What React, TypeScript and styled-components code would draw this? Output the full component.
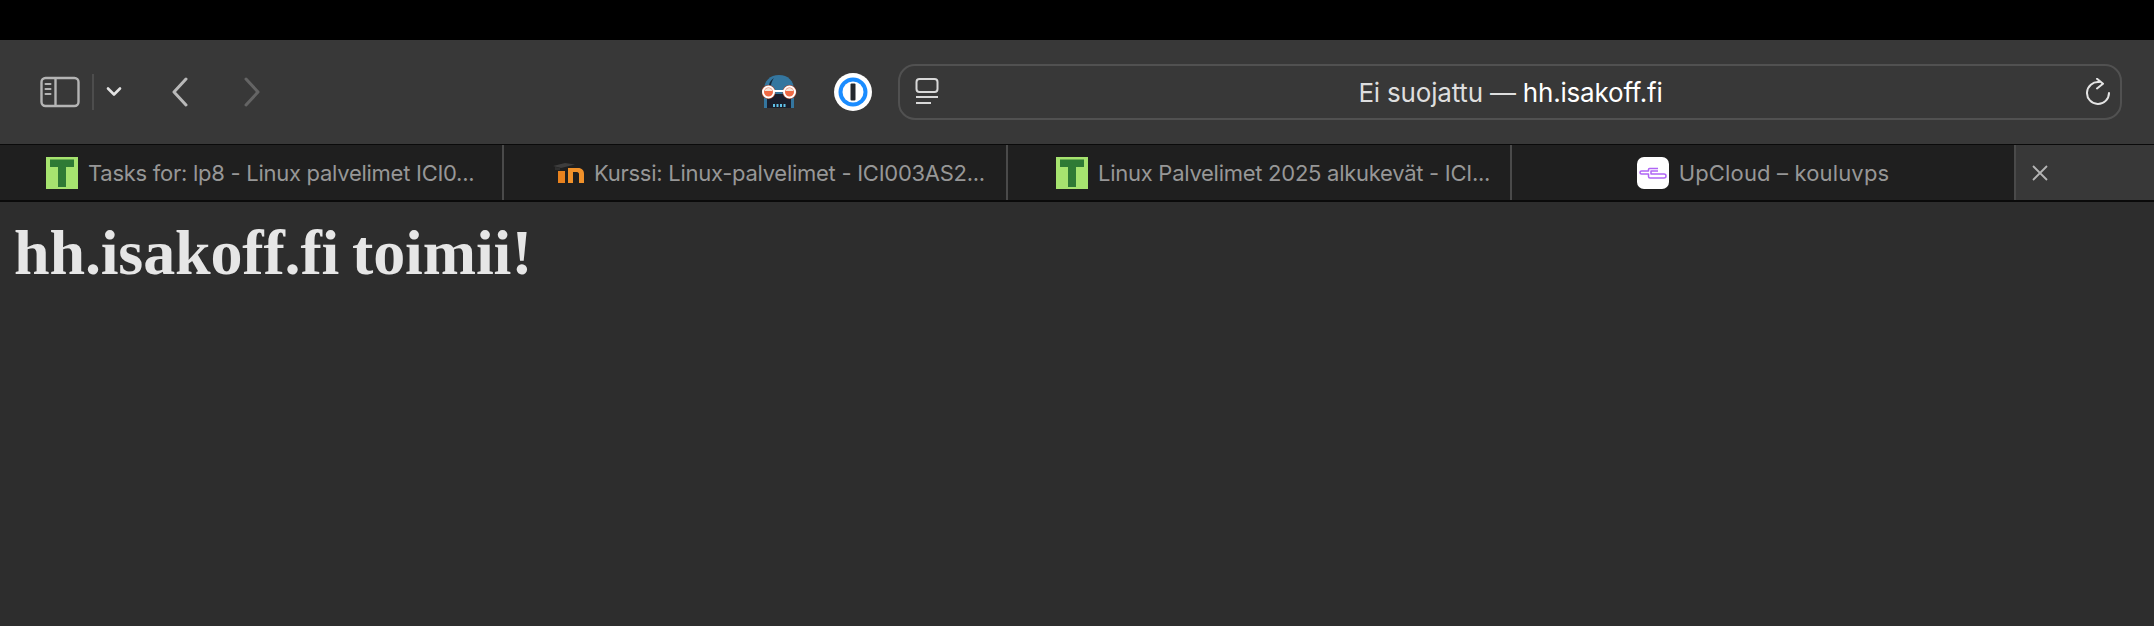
import React from "react";
import styled, { createGlobalStyle } from "styled-components";

const GlobalStyle = createGlobalStyle`
  html, body {
    margin: 0;
    padding: 0;
    background: #2d2d2d;
  }
  body {
    font-family: "Inter", "Liberation Sans", sans-serif;
    overflow: hidden;
  }
`;

const Page = styled.div`
  width: 2154px;
  height: 626px;
  display: flex;
  flex-direction: column;
  background: #2d2d2d;
`;

const TopStrip = styled.div`
  height: 40px;
  background: #000;
`;

const Toolbar = styled.div`
  height: 104px;
  background: #383838;
  display: flex;
  align-items: center;
  padding: 0 32px 0 40px;
`;

const ToolbarLeft = styled.div`
  display: flex;
  align-items: center;
  flex: 1;
`;

const Divider = styled.div`
  width: 2px;
  height: 36px;
  background: #4d4d4d;
  margin: 0 12px;
`;

const IconSlot = styled.svg<{ $ml?: number }>`
  display: block;
  flex-shrink: 0;
  margin-left: ${(p) => p.$ml ?? 0}px;
`;

const Extensions = styled.div`
  display: flex;
  align-items: center;
  gap: 36px;
  margin-right: 26px;
`;

const AddressBar = styled.div`
  width: 1224px;
  height: 56px;
  box-sizing: border-box;
  border: 2px solid #515151;
  border-radius: 17px;
  display: flex;
  align-items: center;
  padding: 0 10px 0 15px;
`;

const AddressText = styled.div`
  flex: 1;
  text-align: center;
  font-size: 26px;
  letter-spacing: -0.2px;
  color: #dedede;
  padding-right: 4px;

  b {
    font-weight: 400;
    color: #fff;
  }
`;

const TabBar = styled.div`
  height: 58px;
  box-sizing: border-box;
  background: #383838;
  border-top: 1px solid #0a0a0a;
  border-bottom: 2px solid #0a0a0a;
  display: flex;
`;

const Tab = styled.div<{ $inset: number }>`
  width: 504px;
  box-sizing: border-box;
  background: #1f1f1f;
  border-right: 2px solid #4a4a4a;
  display: flex;
  align-items: center;
  justify-content: ${(p) => (p.$inset ? "flex-start" : "center")};
  gap: 10px;
  padding-left: ${(p) => p.$inset}px;
`;

const TabTitle = styled.span<{ $tracking: number }>`
  font-size: 22px;
  letter-spacing: ${(p) => p.$tracking}px;
  color: #979797;
  white-space: nowrap;
`;

const TabClose = styled.div`
  flex: 1;
  display: flex;
  align-items: center;
  padding-left: 16px;
`;

const Content = styled.div`
  flex: 1;
  padding: 0 14px;
`;

const Heading = styled.h1`
  margin: 14px 0 0;
  font-family: "Liberation Serif", "Times New Roman", serif;
  font-size: 64px;
  font-weight: 700;
  line-height: 74px;
  letter-spacing: -0.15px;
  word-spacing: -3px;
  color: #e6e6e6;
`;

const SidebarIcon = () => (
  <IconSlot width="40" height="32" viewBox="0 0 40 32" fill="none">
    <rect x="1.5" y="2" width="37" height="28" rx="4" stroke="#b4b4b4" strokeWidth="2.4" />
    <path d="M15.5 2v28" stroke="#b4b4b4" strokeWidth="2.4" />
    <path d="M5.5 8h5M5.5 13h5M5.5 18h5" stroke="#b4b4b4" strokeWidth="2" strokeLinecap="round" />
  </IconSlot>
);

const RobotIcon = () => (
  <IconSlot width="36" height="36" viewBox="0 0 36 36">
    <path d="M2 34V16C2 7 8 1 17 1s15 6 15 15v18z" fill="#34769f" />
    <path d="M12 4C9 6 7.500 8 7 11h2c.5-3 1.500-5 3-7z" fill="#14283a" />
    <path d="M5 20h24v14H5z" fill="#1b1f2c" />
    <path d="M11 30h2v3h-2zM14.500 30h2v3h-2zM18 30h2v3h-2zM21.500 30h2v3h-2z" fill="#5fc0e8" />
    <circle cx="6.500" cy="18" r="7" fill="#a8472e" />
    <circle cx="27.500" cy="18" r="7" fill="#a8472e" />
    <circle cx="6.500" cy="18" r="5.500" fill="#ef6a45" stroke="#fff" strokeWidth="2" />
    <circle cx="27.500" cy="18" r="5.500" fill="#ef6a45" stroke="#fff" strokeWidth="2" />
    <path d="M2.500 17a4.200 4.200 0 0 1 8 0zM23.500 17a4.200 4.200 0 0 1 8 0z" fill="#f3e4da" />
    <path d="M12 17h10" stroke="#fff" strokeWidth="2" />
  </IconSlot>
);

const TasksFavicon = () => (
  <IconSlot width="32" height="32" viewBox="0 0 32 32">
    <rect width="32" height="32" fill="#a6e36f" />
    <path d="M4 2.500h24v7.500H20v20h-8V10H4z" fill="#2f7a35" />
  </IconSlot>
);

const MoodleFavicon = () => (
  <IconSlot width="32" height="32" viewBox="0 0 32 32">
    <path d="M1 9L13 6l10 1.500L9 11z" fill="#3d3d3d" />
    <path d="M3 10l5 1v2H3z" fill="#2f2f2f" />
    <path d="M6 14h7v12H6z" fill="#e8821e" />
    <path d="M16 26V11h10c4 0 6 2.500 6 6v9h-5v-9c0-1-1-2-2-2h-4v11z" fill="#f0912a" />
  </IconSlot>
);

const UpCloudFavicon = () => (
  <IconSlot width="32" height="32" viewBox="0 0 32 32">
    <rect width="32" height="32" rx="7" fill="#fff" />
    <path
      d="M21 11.500h-8.500a1 1 0 0 0-1 1V14H4.500a1.500 1.500 0 0 0 0 3H11.500v2.500a1.500 1.500 0 0 0 1.500 1.500h14a2 2 0 0 0 0-4H14v-3h7"
      fill="none"
      stroke="#b065f5"
      strokeWidth="1.500"
      strokeLinejoin="round"
    />
  </IconSlot>
);

const tabs = [
  { title: "Tasks for: lp8 - Linux palvelimet ICI0...", icon: <TasksFavicon />, inset: 46, tracking: -0.27 },
  { title: "Kurssi: Linux-palvelimet - ICI003AS2...", icon: <MoodleFavicon />, inset: 48, tracking: -0.27 },
  { title: "Linux Palvelimet 2025 alkukevät - ICI...", icon: <TasksFavicon />, inset: 48, tracking: -0.27 },
  { title: "UpCloud – kouluvps", icon: <UpCloudFavicon />, inset: 0, tracking: 0.15 },
];

export default function App() {
  return (
    <Page>
      <GlobalStyle />
      <TopStrip />
      <Toolbar>
        <ToolbarLeft>
          <SidebarIcon />
          <Divider />
          <IconSlot width="16" height="12" viewBox="0 0 16 12" fill="none">
            <path d="M2 2.500l6 6 6-6" stroke="#e2e2e2" strokeWidth="2.600" strokeLinecap="round" strokeLinejoin="round" />
          </IconSlot>
          <IconSlot $ml={48} width="20" height="30" viewBox="0 0 20 30" fill="none">
            <path d="M16 2L4 15l12 13" stroke="#b9b9b9" strokeWidth="3" strokeLinecap="round" strokeLinejoin="round" />
          </IconSlot>
          <IconSlot $ml={52} width="20" height="30" viewBox="0 0 20 30" fill="none">
            <path d="M4 2l12 13L4 28" stroke="#646464" strokeWidth="3" strokeLinecap="round" strokeLinejoin="round" />
          </IconSlot>
        </ToolbarLeft>
        <Extensions>
          <RobotIcon />
          <IconSlot width="38" height="38" viewBox="0 0 38 38">
            <circle cx="19" cy="19" r="19" fill="#fff" />
            <circle cx="19" cy="19" r="14.500" fill="#1a8cff" />
            <circle cx="19" cy="19" r="10.500" fill="#fff" />
            <rect x="16.500" y="10.500" width="5" height="17" rx="1" fill="#23282e" />
          </IconSlot>
        </Extensions>
        <AddressBar>
          <IconSlot width="24" height="28" viewBox="0 0 24 28" fill="none">
            <rect x="1.500" y="1" width="21" height="13" rx="3" stroke="#d8d8d8" strokeWidth="2" />
            <path d="M1 19h22M1 25h15" stroke="#d8d8d8" strokeWidth="2" />
          </IconSlot>
          <AddressText>
            Ei suojattu — <b>hh.isakoff.fi</b>
          </AddressText>
          <IconSlot width="24" height="28" viewBox="0 0 24 28" fill="none">
            <path
              d="M13 4.050A11 11 0 1 0 23 15M11 .8l6 5-6 4.700"
              stroke="#e4e4e4"
              strokeWidth="2"
              strokeLinecap="round"
              strokeLinejoin="round"
            />
          </IconSlot>
        </AddressBar>
      </Toolbar>
      <TabBar>
        {tabs.map((tab) => (
          <Tab key={tab.title} $inset={tab.inset}>
            {tab.icon}
            <TabTitle $tracking={tab.tracking}>{tab.title}</TabTitle>
          </Tab>
        ))}
        <TabClose>
          <IconSlot width="16" height="16" viewBox="0 0 16 16" fill="none">
            <path d="M1 1l14 14M15 1L1 15" stroke="#b4b4b4" strokeWidth="1.800" />
          </IconSlot>
        </TabClose>
      </TabBar>
      <Content>
        <Heading>hh.isakoff.fi toimii!</Heading>
      </Content>
    </Page>
  );
}
